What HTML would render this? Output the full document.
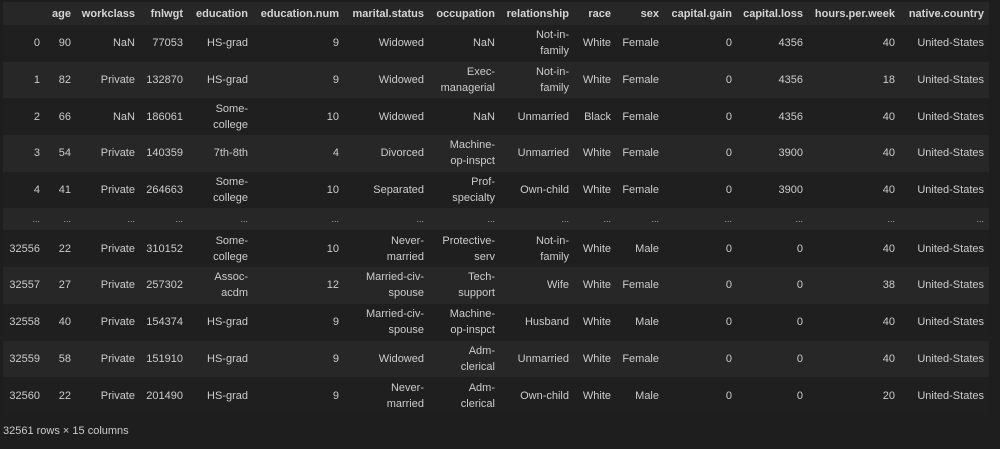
<!DOCTYPE html>
<html><head><meta charset="utf-8"><style>
html,body{margin:0;padding:0;background:#1e1e1e;width:1000px;height:449px;overflow:hidden}
body{font-family:"Liberation Sans",Arial,sans-serif;font-size:11px;color:#cccccc}
table{position:absolute;left:3px;top:2px;border-collapse:collapse;table-layout:fixed;width:986px}
th,td{text-align:right;padding:0 5px 0 0;line-height:16px;vertical-align:middle;white-space:nowrap}
th{font-weight:bold;height:23px;background:#272727;color:#d4d4d4}
td{height:36.7px}
tr.l td{background:#272727}
tr.d td{background:#1f1f1f}
tr.e td{height:22px;font-size:9px;color:#aaa}
#f{position:absolute;left:3px;top:425px;font-size:11px}
</style></head><body>
<table>
<colgroup><col style="width:42px"><col style="width:31px"><col style="width:64px"><col style="width:48px"><col style="width:65px"><col style="width:91px"><col style="width:85px"><col style="width:71px"><col style="width:74px"><col style="width:42px"><col style="width:48px"><col style="width:73px"><col style="width:71px"><col style="width:92px"><col style="width:89px"></colgroup>
<tr><th></th><th>age</th><th>workclass</th><th>fnlwgt</th><th>education</th><th>education.num</th><th>marital.status</th><th>occupation</th><th>relationship</th><th>race</th><th>sex</th><th>capital.gain</th><th>capital.loss</th><th>hours.per.week</th><th>native.country</th></tr>
<tr class="d"><td>0</td><td>90</td><td>NaN</td><td>77053</td><td>HS-grad</td><td>9</td><td>Widowed</td><td>NaN</td><td>Not-in-<br>family</td><td>White</td><td>Female</td><td>0</td><td>4356</td><td>40</td><td>United-States</td></tr>
<tr class="l"><td>1</td><td>82</td><td>Private</td><td>132870</td><td>HS-grad</td><td>9</td><td>Widowed</td><td>Exec-<br>managerial</td><td>Not-in-<br>family</td><td>White</td><td>Female</td><td>0</td><td>4356</td><td>18</td><td>United-States</td></tr>
<tr class="d"><td>2</td><td>66</td><td>NaN</td><td>186061</td><td>Some-<br>college</td><td>10</td><td>Widowed</td><td>NaN</td><td>Unmarried</td><td>Black</td><td>Female</td><td>0</td><td>4356</td><td>40</td><td>United-States</td></tr>
<tr class="l"><td>3</td><td>54</td><td>Private</td><td>140359</td><td>7th-8th</td><td>4</td><td>Divorced</td><td>Machine-<br>op-inspct</td><td>Unmarried</td><td>White</td><td>Female</td><td>0</td><td>3900</td><td>40</td><td>United-States</td></tr>
<tr class="d"><td>4</td><td>41</td><td>Private</td><td>264663</td><td>Some-<br>college</td><td>10</td><td>Separated</td><td>Prof-<br>specialty</td><td>Own-child</td><td>White</td><td>Female</td><td>0</td><td>3900</td><td>40</td><td>United-States</td></tr>
<tr class="l e"><td>...</td><td>...</td><td>...</td><td>...</td><td>...</td><td>...</td><td>...</td><td>...</td><td>...</td><td>...</td><td>...</td><td>...</td><td>...</td><td>...</td><td>...</td></tr>
<tr class="d"><td>32556</td><td>22</td><td>Private</td><td>310152</td><td>Some-<br>college</td><td>10</td><td>Never-<br>married</td><td>Protective-<br>serv</td><td>Not-in-<br>family</td><td>White</td><td>Male</td><td>0</td><td>0</td><td>40</td><td>United-States</td></tr>
<tr class="l"><td>32557</td><td>27</td><td>Private</td><td>257302</td><td>Assoc-<br>acdm</td><td>12</td><td>Married-civ-<br>spouse</td><td>Tech-<br>support</td><td>Wife</td><td>White</td><td>Female</td><td>0</td><td>0</td><td>38</td><td>United-States</td></tr>
<tr class="d"><td>32558</td><td>40</td><td>Private</td><td>154374</td><td>HS-grad</td><td>9</td><td>Married-civ-<br>spouse</td><td>Machine-<br>op-inspct</td><td>Husband</td><td>White</td><td>Male</td><td>0</td><td>0</td><td>40</td><td>United-States</td></tr>
<tr class="l"><td>32559</td><td>58</td><td>Private</td><td>151910</td><td>HS-grad</td><td>9</td><td>Widowed</td><td>Adm-<br>clerical</td><td>Unmarried</td><td>White</td><td>Female</td><td>0</td><td>0</td><td>40</td><td>United-States</td></tr>
<tr class="d"><td>32560</td><td>22</td><td>Private</td><td>201490</td><td>HS-grad</td><td>9</td><td>Never-<br>married</td><td>Adm-<br>clerical</td><td>Own-child</td><td>White</td><td>Male</td><td>0</td><td>0</td><td>20</td><td>United-States</td></tr>
</table>
<div id="f">32561 rows × 15 columns</div>
</body></html>
